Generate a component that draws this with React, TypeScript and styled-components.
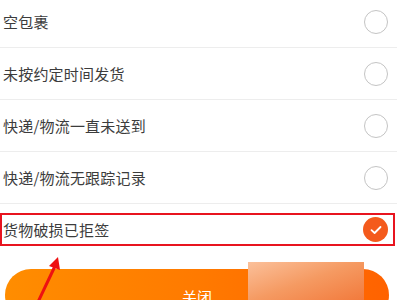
import React from "react";
import styled, { createGlobalStyle } from "styled-components";

const Global = createGlobalStyle`
  html, body {
    margin: 0;
    padding: 0;
    background: #fff;
  }
  body {
    width: 400px;
    height: 300px;
    overflow: hidden;
    font-family: "Noto Sans CJK SC", "Noto Sans", sans-serif;
  }
`;

const Page = styled.div`
  position: relative;
  width: 400px;
  height: 300px;
  overflow: hidden;
  background: #fff;
`;

const List = styled.div`
  margin-top: -4px;
  display: flex;
  flex-direction: column;
`;

const Row = styled.div<{ $last?: boolean }>`
  position: relative;
  height: 51px;
  display: flex;
  align-items: center;
  justify-content: space-between;
  padding: 0 9px 0 3px;
  border-bottom: 1px solid ${(p) => (p.$last ? "transparent" : "#ededed")};
  margin-right: 3px;
`;

const Label = styled.span`
  font-size: 15px;
  color: #3c3c3c;
  letter-spacing: 0.2px;
`;

const Radio = styled.span`
  width: 22px;
  height: 22px;
  border-radius: 50%;
  border: 1.5px solid #c4c4c4;
  box-sizing: content-box;
`;

const Checked = styled.span`
  width: 25px;
  height: 25px;
  border-radius: 50%;
  background: #f45a1c;
  display: flex;
  align-items: center;
  justify-content: center;
`;

const Highlight = styled.div`
  position: absolute;
  left: 0;
  right: 2px;
  top: 9px;
  bottom: 9px;
  border: 2px solid #e8141f;
  pointer-events: none;
`;

const CloseButton = styled.button`
  margin: 13px 11px 0 5px;
  width: calc(100% - 16px);
  height: 52px;
  border: none;
  border-radius: 26px;
  background: linear-gradient(90deg, #ff8d00 0%, #ff7a00 50%, #ff6200 100%);
  color: #fff;
  font-family: "Noto Sans CJK SC", sans-serif;
  font-size: 15px;
  padding-top: 4px;
  display: flex;
  justify-content: center;
  align-items: center;
`;

const Patch = styled.div`
  position: absolute;
  left: 248px;
  top: 262px;
  width: 116px;
  height: 38px;
  background: linear-gradient(160deg, #fbc09a 0%, #f59a62 50%, #f27a3c 100%);
`;

const Arrow = styled.svg`
  position: absolute;
  left: 30px;
  top: 250px;
`;

const reasons = ["空包裹", "未按约定时间发货", "快递/物流一直未送到", "快递/物流无跟踪记录"];

export default function App() {
  return (
    <Page>
      <Global />
      <List>
        {reasons.map((r) => (
          <Row key={r}>
            <Label>{r}</Label>
            <Radio />
          </Row>
        ))}
        <Row $last>
          <Label>货物破损已拒签</Label>
          <Checked>
            <svg width="12" height="10" viewBox="0 0 12 10">
              <path d="M1.5 5.2 L4.6 8 L10.5 2" fill="none" stroke="#fff" strokeWidth="1.8" strokeLinecap="round" strokeLinejoin="round" />
            </svg>
          </Checked>
          <Highlight />
        </Row>
      </List>
      <CloseButton>关闭</CloseButton>
      <Patch />
      <Arrow width="40" height="50" viewBox="0 0 40 50">
        <path d="M8 52 L26 14" stroke="#ee1111" strokeWidth="3" strokeLinecap="round" />
        <path d="M28 7 L19 16 L30 20 Z" fill="#ee1111" />
      </Arrow>
    </Page>
  );
}
